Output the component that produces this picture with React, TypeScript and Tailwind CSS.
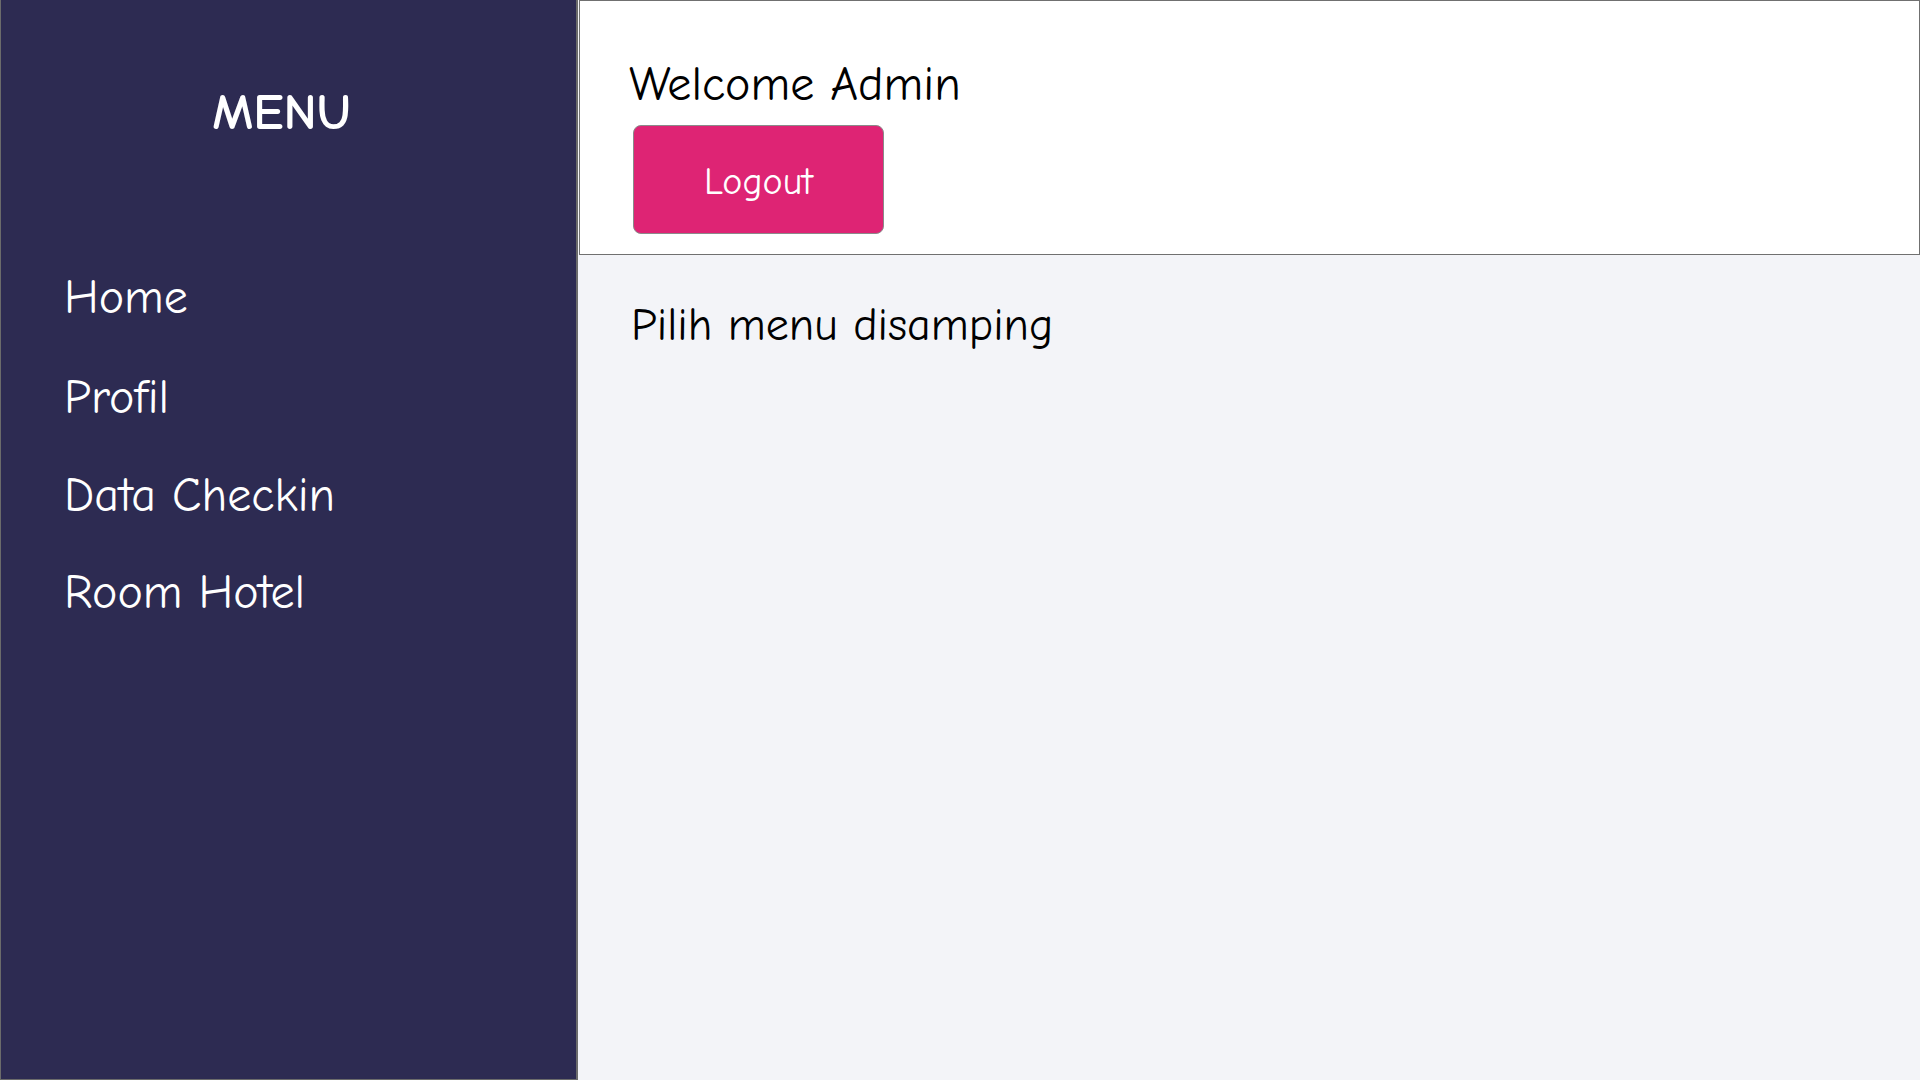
import React from "react";

const font = { fontFamily: '"Comic Sans MS", "Comic Neue", "DejaVu Sans", sans-serif' };

export default function App() {
  return (
    <div className="flex h-[1080px] w-[1920px] bg-[#f3f4f8]" style={font}>
      <aside className="flex h-full w-[578px] shrink-0 flex-col border-l border-r-2 border-b border-[#6b6b6b] bg-[#2d2b52] text-white">
        <div className="flex h-[226px] items-center justify-center pr-[14px] pb-[2px]">
          <h1 className="text-[51px] font-bold leading-none">MENU</h1>
        </div>
        <nav className="flex flex-col pl-[63px] pt-[20px]">
          <a className="flex h-[103px] items-center text-[48px] leading-none">Home</a>
          <a className="flex h-[98px] items-center text-[48px] leading-none">Profil</a>
          <a className="flex h-[97px] items-center text-[48px] leading-none">Data Checkin</a>
          <a className="flex h-[97px] items-center text-[48px] leading-none">Room Hotel</a>
        </nav>
      </aside>
      <main className="flex flex-1 flex-col pl-[1px]">
        <header className="flex h-[255px] flex-col border border-[#707070] bg-white pl-[49px] pt-[55px]">
          <div className="h-[58px] text-[48px] leading-[58px] text-black">Welcome Admin</div>
          <button className="ml-[4px] mt-[11px] flex h-[109px] w-[251px] items-center justify-center rounded-[8px] border border-[#8a8a8a] bg-[#de2474] pt-[6px] text-[38px] text-white">
            Logout
          </button>
        </header>
        <div className="pl-[52px] pt-[43px] text-[46px] leading-[1.2] text-black">Pilih menu disamping</div>
      </main>
    </div>
  );
}
